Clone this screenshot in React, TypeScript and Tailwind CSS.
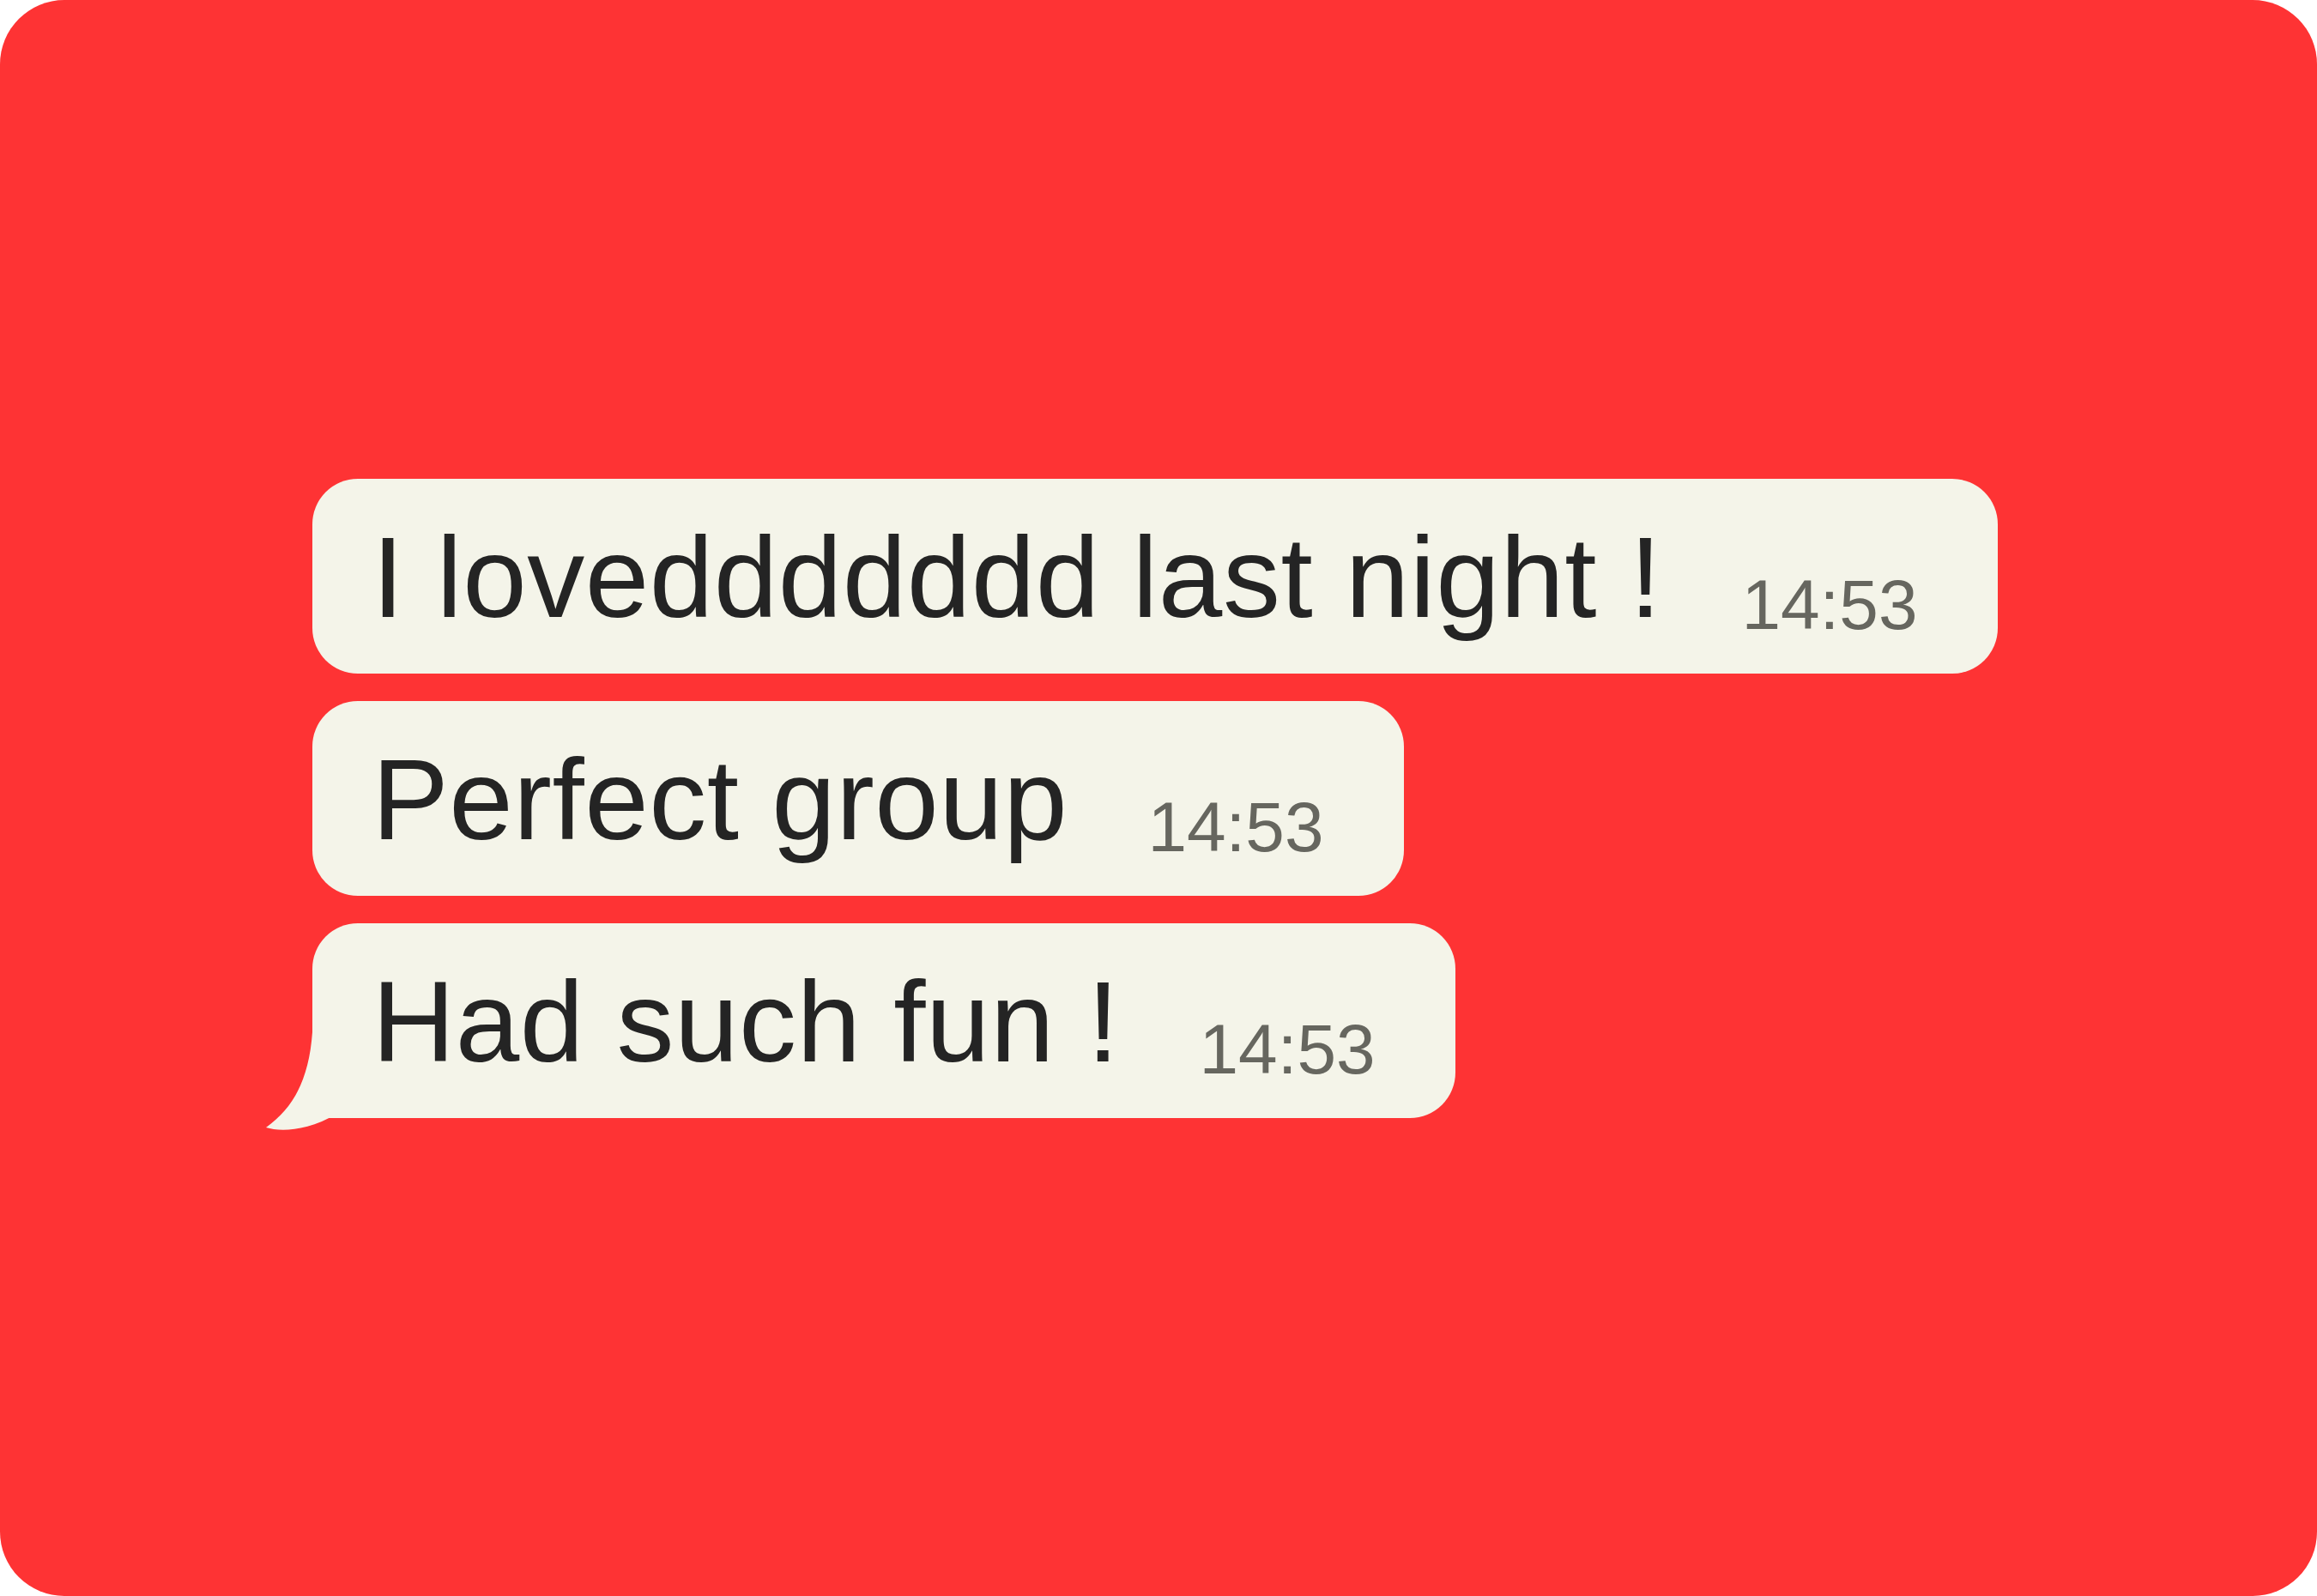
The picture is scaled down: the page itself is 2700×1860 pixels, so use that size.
import React from 'react';

type Msg = { text: string; time: string; tail?: boolean };

const messages: Msg[] = [
  { text: 'I loveddddddd last night !', time: '14:53' },
  { text: 'Perfect group', time: '14:53' },
  { text: 'Had such fun !', time: '14:53', tail: true },
];

const Tail: React.FC = () => (
  <svg
    className="absolute left-[-60px] bottom-[-20px]"
    width="130"
    height="130"
    viewBox="-60 -110 130 130"
  >
    <path
      d="M0,-100 C-4,-45 -22,-12 -54,11 C-38,16 -8,16 29,-5 C38,-1 46,0 56,0 L56,-100 Z"
      fill="#f4f4e9"
    />
  </svg>
);

const Bubble: React.FC<{ msg: Msg }> = ({ msg }) => (
  <div
    className={`relative flex items-end gap-[93px] bg-[#f4f4e9] pl-[69px] pr-[93px] pt-[48px] pb-[45px] ${
      msg.tail ? 'rounded-[53px] rounded-bl-[20px]' : 'rounded-[53px]'
    }`}
  >
    {msg.tail && <Tail />}
    <span className="relative text-[134px] leading-none tracking-[0.5px] text-[#242424] whitespace-pre">{msg.text}</span>
    <span className="relative mb-[-6px] text-[82px] leading-none text-[#66665f]">{msg.time}</span>
  </div>
);

const App: React.FC = () => {
  return (
    <div className="w-[2700px] h-[1860px] bg-white font-['Liberation_Sans',Arial,sans-serif]">
      <div className="w-full h-full rounded-[75px] bg-[#fe3334] flex items-center justify-center">
        <div className="flex flex-col items-start gap-[32px] pr-[8px]">
          {messages.map((m, i) => (
            <Bubble key={i} msg={m} />
          ))}
        </div>
      </div>
    </div>
  );
};

export default App;
